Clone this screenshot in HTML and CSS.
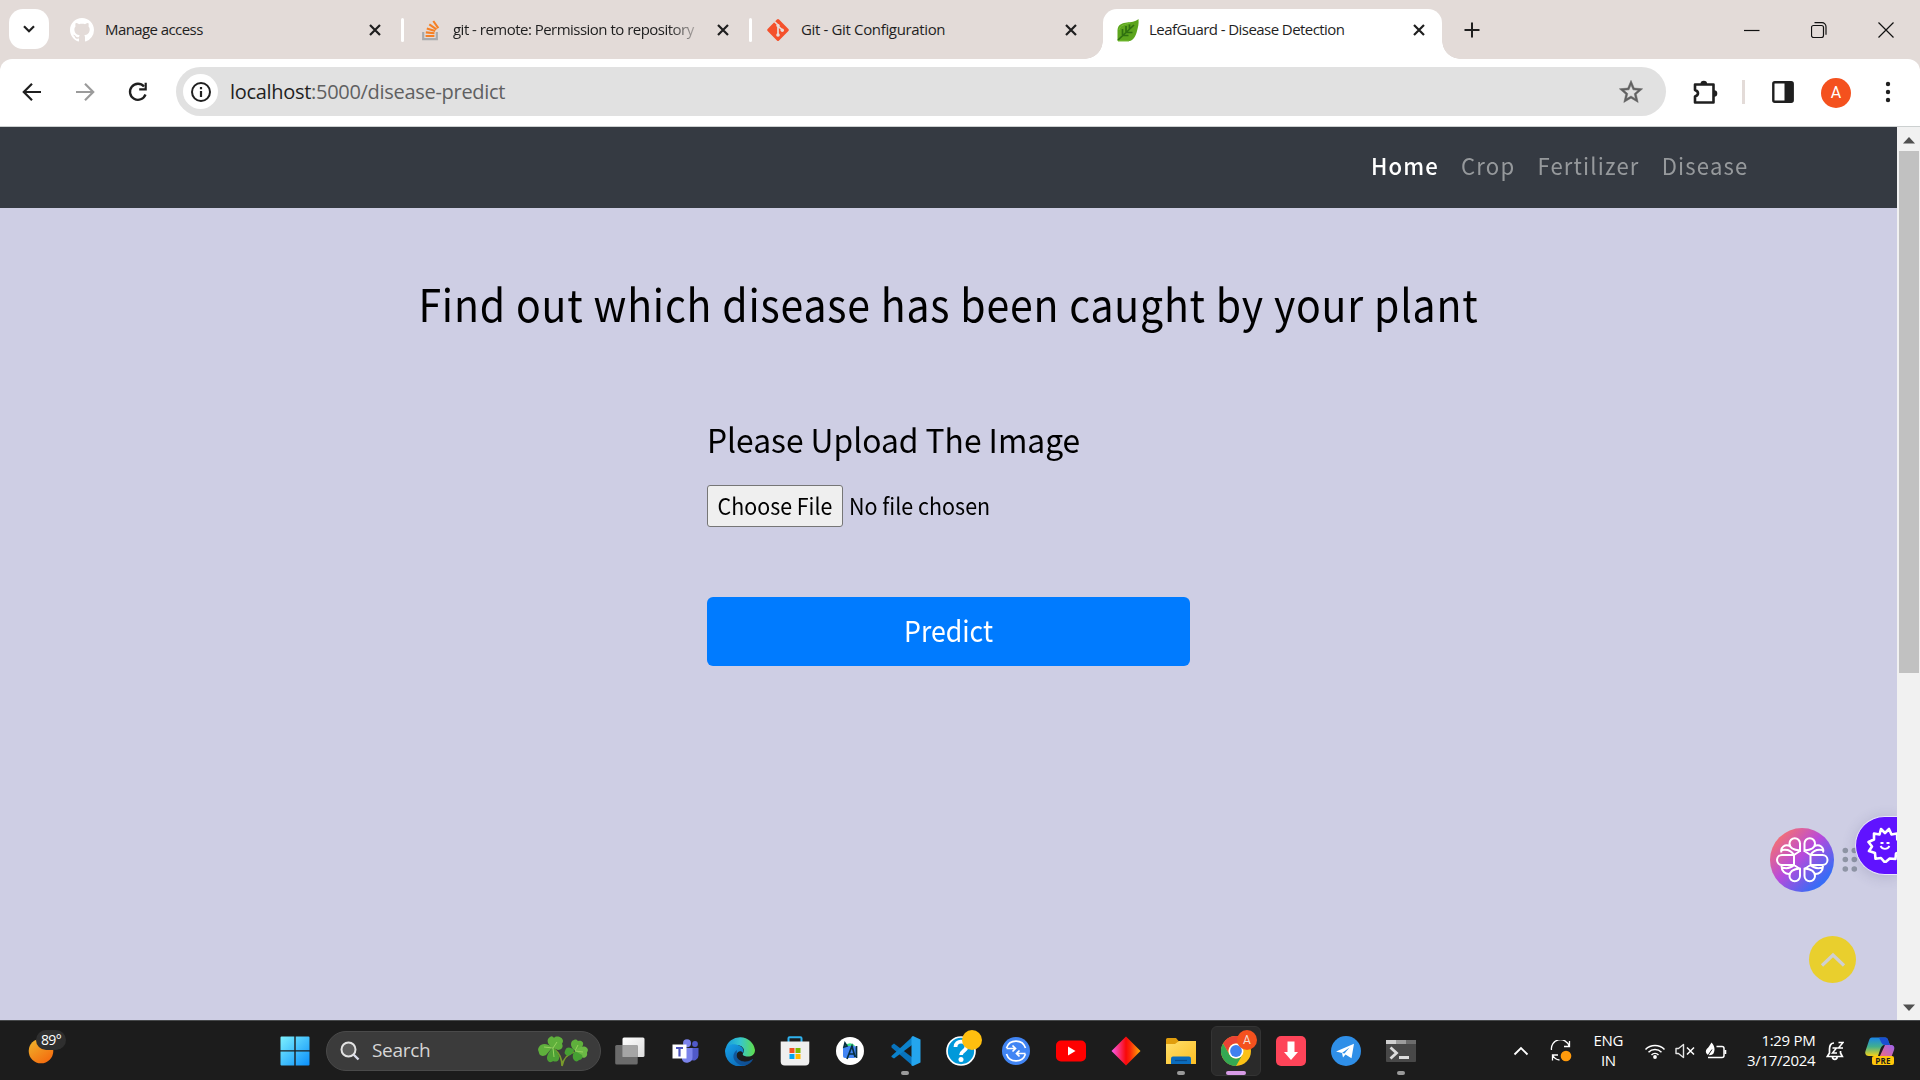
FILE: index.html
```html
<!DOCTYPE html>
<html lang="en">
<head>
<meta charset="utf-8">
<title>LeafGuard - Disease Detection</title>
<link rel="stylesheet" href="styles.css">
</head>
<body>
<header class="tabstrip">
  <button class="tab-search"><svg width="12" height="8" viewBox="0 0 12 8"><path d="M1 1.2l5 5 5-5" fill="none" stroke="#1f1f1f" stroke-width="2.2"/></svg></button>
  <div class="tab tab-1">
    <svg class="fav" width="24" height="24" viewBox="0 0 16 16"><path fill="#fff" d="M8 0C3.58 0 0 3.58 0 8c0 3.54 2.29 6.53 5.47 7.59.4.07.55-.17.55-.38 0-.19-.01-.82-.01-1.49-2.01.37-2.53-.49-2.69-.94-.09-.23-.48-.94-.82-1.13-.28-.15-.68-.52-.01-.53.63-.01 1.08.58 1.23.82.72 1.21 1.87.87 2.33.66.07-.52.28-.87.51-1.07-1.78-.2-3.64-.89-3.64-3.95 0-.87.31-1.59.82-2.15-.08-.2-.36-1.02.08-2.12 0 0 .67-.21 2.2.82.64-.18 1.32-.27 2-.27s1.36.09 2 .27c1.53-1.04 2.2-.82 2.2-.82.44 1.1.16 1.92.08 2.12.51.56.82 1.27.82 2.15 0 3.07-1.87 3.75-3.65 3.95.29.25.54.73.54 1.48 0 1.07-.01 1.93-.01 2.2 0 .21.15.46.55.38A8.01 8.01 0 0 0 16 8c0-4.42-3.58-8-8-8z"/></svg>
    <span class="tab-title t-manage">Manage access</span>
    <svg class="x" width="12" height="12" viewBox="0 0 12 12"><path d="M1 1l10 10M11 1L1 11"/></svg>
  </div>
  <i class="tab-sep"></i>
  <div class="tab tab-2">
    <svg class="fav" width="18" height="22" viewBox="0 0 18 22"><path d="M1.2 13v7.2h13.6V13" fill="none" stroke="#a9aaac" stroke-width="2.2"/><g stroke="#f58025" stroke-width="2.1"><path d="M3.6 17h8.8M3.8 13.4l8.7.9M4.8 9.4l8.4 2.6M7.3 5.4l7.2 5M11.3 2l5 7.2"/></g></svg>
    <span class="tab-title t-remote">git - remote: Permission to repository</span>
    <svg class="x" width="12" height="12" viewBox="0 0 12 12"><path d="M1 1l10 10M11 1L1 11"/></svg>
  </div>
  <i class="tab-sep"></i>
  <div class="tab tab-3">
    <svg class="fav" width="24" height="24" viewBox="0 0 24 24"><rect x="3.9" y="3.9" width="16.2" height="16.2" rx="1.5" transform="rotate(45 12 12)" fill="#f4512c"/><g stroke="#e9ddda" stroke-width="1.7" fill="none"><path d="M8.4 3.5L12 7v10M12 8l4.4 4.2"/></g><circle cx="12" cy="7.6" r="1.7" fill="#e9ddda"/><circle cx="12" cy="17" r="1.8" fill="#e9ddda"/><circle cx="16.3" cy="12.2" r="1.7" fill="#e9ddda"/></svg>
    <span class="tab-title t-config">Git - Git Configuration</span>
    <svg class="x" width="12" height="12" viewBox="0 0 12 12"><path d="M1 1l10 10M11 1L1 11"/></svg>
  </div>
  <div class="tab tab-active">
    <svg class="fav" width="22" height="24" viewBox="0 0 22 24"><path d="M.5 23V12C1 6 6 5 10 4.500S18 4 21.500 1c.5 5-.5 8-1.500 12-1 5-4 9.500-7.500 10z" fill="#5ca51d"/><path d="M1 22L17 7M5 17.500h6.500M8.500 14.500h7M5.500 11v6M9 8v6.500M12.500 6.500v5" stroke="#2f7010" stroke-width="1.700" fill="none"/><path d="M1 23h11M2 12C3 7 8 6.500 13 5" stroke="#74bd35" fill="none"/></svg>
    <span class="tab-title t-leaf">LeafGuard - Disease Detection</span>
    <svg class="x" width="12" height="12" viewBox="0 0 12 12"><path d="M1 1l10 10M11 1L1 11"/></svg>
  </div>
  <svg class="new-tab" width="16" height="16" viewBox="0 0 16 16"><path d="M8 .5v15M.5 8h15" stroke="#1f1f1f" stroke-width="2"/></svg>
  <div class="win-controls">
    <svg width="16" height="16" viewBox="0 0 16 16"><path d="M0 8.500h15.500"/></svg>
    <svg width="16" height="16" viewBox="0 0 16 16"><rect x=".5" y="3.500" width="12" height="12" rx="2"/><path d="M3.500.7h7.500a4 4 0 0 1 4 4v8"/></svg>
    <svg width="16" height="16" viewBox="0 0 16 16"><path d="M.5.5l15 15M15.500.5l-15 15"/></svg>
  </div>
</header>

<div class="toolbar">
  <svg class="nav-ic" width="20" height="20" viewBox="0 0 20 20"><path d="M19 10H2.500M10 1.800L1.800 10l8.200 8.200" fill="none" stroke="#1f1f1f" stroke-width="2.200"/></svg>
  <svg class="nav-ic" width="20" height="20" viewBox="0 0 20 20"><path d="M1 10h16.500M10 1.800l8.200 8.200-8.200 8.200" fill="none" stroke="#9b9b9b" stroke-width="2.200"/></svg>
  <svg class="nav-ic" width="20" height="20" viewBox="0 0 20 20"><path d="M17.500 12.500A8 8 0 1 1 16 4.500" fill="none" stroke="#1f1f1f" stroke-width="2.300"/><path d="M18.800.8v7.700h-7.600V6.200h5.400V.8z" fill="#1f1f1f"/></svg>
  <div class="omnibox">
    <span class="site-info"><svg width="22" height="22" viewBox="0 0 22 22"><circle cx="11" cy="11" r="9" fill="none" stroke="#1f1f1f" stroke-width="2"/><path d="M11 10v6M11 6v2.200" stroke="#1f1f1f" stroke-width="2.200"/></svg></span>
    <span class="url"><b>localhost</b>:5000/disease-predict</span>
    <svg class="star" width="28" height="28" viewBox="0 0 24 24"><path fill="#616161" stroke="#616161" stroke-width=".4" d="M22 9.240l-7.190-.62L12 2 9.190 8.630 2 9.240l5.460 4.730L5.820 21 12 17.270 18.180 21l-1.630-7.030L22 9.240zM12 15.400l-3.760 2.270 1-4.280-3.320-2.880 4.380-.38L12 6.100l1.710 4.040 4.380.38-3.320 2.880 1 4.280L12 15.400z"/></svg>
  </div>
  <svg class="puzzle" width="26" height="26" viewBox="0 0 26 26"><path d="M3 5.500h18.500v18H3v-6c4-1.500 4-5 0-6.500z" fill="none" stroke="#1f1f1f" stroke-width="2.600" stroke-linejoin="round"/><path d="M8.500 5a3.300 3.300 0 0 1 6.600 0zM22 11.200a3.300 3.300 0 0 1 0 6.600z" fill="#1f1f1f"/></svg>
  <i class="tool-sep"></i>
  <svg class="panel" width="22" height="22" viewBox="0 0 22 22"><rect x="1.300" y="1.300" width="19.400" height="19.400" rx="1.500" fill="none" stroke="#1f1f1f" stroke-width="2.400"/><path d="M12.500 1h8.500v20h-8.500z" fill="#1f1f1f"/></svg>
  <span class="avatar">A</span>
  <svg class="kebab" width="6" height="22" viewBox="0 0 6 22"><g fill="#1f1f1f"><circle cx="3" cy="3" r="2.200"/><circle cx="3" cy="11" r="2.200"/><circle cx="3" cy="19" r="2.200"/></g></svg>
</div>

<div class="viewport">
  <div class="page">
    <nav class="site-nav">
      <div class="links"><a class="on">Home</a><a>Crop</a><a>Fertilizer</a><a>Disease</a></div>
    </nav>
    <main>
      <h1>Find out which disease has been caught by your plant</h1>
      <form class="upload">
        <label>Please Upload The Image</label>
        <div class="file"><button type="button"><span>Choose File</span></button><span class="nofile">No file chosen</span></div>
        <button type="button" class="predict"><span>Predict</span></button>
      </form>
    </main>
    <svg class="brain" width="64" height="64" viewBox="0 0 64 64"><defs><linearGradient id="bg" x1=".1" y1=".1" x2=".9" y2=".9"><stop offset="0" stop-color="#f8736c"/><stop offset=".45" stop-color="#b84adb"/><stop offset=".9" stop-color="#386cf6"/></linearGradient></defs><circle cx="32" cy="32" r="32" fill="url(#bg)"/><g fill="none" stroke="#fff" stroke-width="2" stroke-linejoin="round"><path id="lobes" d="M30 24V15.500a5 5 0 0 0-10.500 0C19.500 20 23 22 30 22.500M20 18c-5-2.500-10 1.500-8.500 6.500M12 22c5-1 9 0 12 5l6-4M24 27H12a5 5 0 0 0 0 10h12zM30 41L24 37c-3 3-7 4-12 2.500M11.500 38c0 5 3.500 8.500 8.500 8M30 40.500V48a5 5 0 0 1-10.500 0C19.500 44 23 41 30 40.500z"/><use href="#lobes" transform="matrix(-1 0 0 1 64.500 0)"/></g></svg>
    <svg class="grip" width="16" height="26" viewBox="0 0 16 26"><g fill="#8f95a5"><circle cx="3.300" cy="3.500" r="2.800"/><circle cx="12.300" cy="3.500" r="2.800"/><circle cx="3.300" cy="12.500" r="2.800"/><circle cx="12.300" cy="12.500" r="2.800"/><circle cx="3.300" cy="22" r="2.800"/><circle cx="12.300" cy="22" r="2.800"/></g></svg>
    <div class="pill"><svg width="36" height="36" viewBox="0 0 36 36"><path d="M18 6l4-4 2.500 5.500 5.500-1 .3 6 5 2.500-3.300 4.500 2.500 5-5.500 2-.5 5.500-5.800-.5L18 35.500l-4-4.500-5.500.8-.5-5.800-6-2 3-4.500-3.500-4.500 5.500-2.500V6.500l5.500 1L14 2z" fill="none" stroke="#fff" stroke-width="2.600" stroke-linejoin="round"/><path d="M13.500 19c2 3.800 7 3.800 9 0M13.500 16h3M19.500 16h3" fill="none" stroke="#fff" stroke-width="1.800"/></svg></div>
    <div class="totop"><svg width="26" height="16" viewBox="0 0 26 16"><path d="M2 13.500L13 3l11 10.500" fill="none" stroke="#cfcfd2" stroke-width="3.200"/></svg></div>
  </div>
  <div class="scrollbar">
    <svg width="12" height="7" viewBox="0 0 12 7"><path d="M0 6.500L6 0l6 6.500z" fill="#505050"/></svg>
    <i class="thumb"></i>
    <svg width="12" height="7" viewBox="0 0 12 7"><path d="M0 .5L6 7l6-6.500z" fill="#505050"/></svg>
  </div>
</div>

<footer class="taskbar">
  <div class="weather"><svg width="26" height="26" viewBox="0 0 26 26"><defs><linearGradient id="sun" x1=".1" y1="0" x2=".8" y2="1"><stop offset="0" stop-color="#efb52c"/><stop offset="1" stop-color="#f5680d"/></linearGradient></defs><circle cx="13" cy="13" r="12.300" fill="url(#sun)"/></svg><span class="temp">89°</span></div>
  <svg class="start" width="30" height="30" viewBox="0 0 30 30"><defs><linearGradient id="win" x1="0" y1="0" x2="1" y2="1"><stop offset="0" stop-color="#7df1fd"/><stop offset="1" stop-color="#0a8ffb"/></linearGradient></defs><path fill="url(#win)" d="M1.500.5H14.300v13.700H.5V1.500a1 1 0 0 1 1-1zM15.700.5h12.800a1 1 0 0 1 1 1v12.700H15.700zM.5 15.600h13.800v13.900H1.500a1 1 0 0 1-1-1zM15.700 15.600h13.800v12.900a1 1 0 0 1-1 1H15.700z"/></svg>
  <div class="search">
    <svg width="20" height="20" viewBox="0 0 20 20"><circle cx="8.500" cy="8.500" r="7" fill="#5b5b5b" stroke="#e3e3e3" stroke-width="2"/><path d="M13.500 13.500l5 5" stroke="#d9dcea" stroke-width="2.400"/></svg>
    <span>Search</span>
    <svg class="clover" width="52" height="34" viewBox="0 0 52 34"><path d="M17 15q8 6 8 17M37 18Q27 21 25 32" fill="none" stroke="#7a9a2c" stroke-width="1.600"/><g fill="#5fb03c"><path d="M16 14C10 11 9 5 13 3c2-1.500 3 0 4 1 2-3 9-1 9 3 0 1.500-1 2-1 3 2 3-1 6-4 6zM15 14c-3-4-10-6-13-1-2 3 0 4 0 6 1 4 6 3 7 2z" /><path fill="#4da035" d="M15 14c-3 4-7 9-4 13 2 2 4 1 5 0 2 1 5 1 6-2 1-4-3-8-5-11z"/><path d="M37 16c-4-3-4-9 0-10 2-1 3 0 4 1 3-1 6 1 5 4-1 3-4 5-9 5z"/><path fill="#6bb845" d="M38 17c3-4 9-6 12-3 2 2 0 4 0 5 1 4-3 6-6 4z"/><path fill="#46a033" d="M37 16c-3-3-8-4-9 1-1 2 0 3 1 4 3 2 7-1 8-5zM38 17c-3 3-3 8 0 10 2 1 3 0 4-1 3 0 4-3 3-5z"/></g><path d="M16 14l4-6M16 14l-9-1M16 14l1 9M38 17l3-6M38 17l8 1" stroke="#96d35e" stroke-width="1"/></svg>
  </div>
  <div class="apps">
    <span class="app"><svg width="30" height="28" viewBox="0 0 30 28"><defs><linearGradient id="tv" x1="0" y1="0" x2="1" y2="1"><stop offset="0" stop-color="#fff"/><stop offset="1" stop-color="#dcdcdc"/></linearGradient></defs><rect x="7.500" y=".5" width="22" height="19.500" rx="1.500" fill="url(#tv)"/><rect x=".2" y="8" width="22.500" height="19.500" rx="1.500" fill="#747474" fill-opacity=".9"/><path d="M7.500 8h15v12h-15z" fill="#a5a5a5"/></svg></span>
    <span class="app"><svg width="27" height="24" viewBox="0 0 27 24"><circle cx="23" cy="5" r="2.900" fill="#5059c9"/><circle cx="15" cy="4.300" r="4" fill="#7b83eb"/><path d="M18 9h8.500v7.500a5 5 0 0 1-8 4z" fill="#5059c9"/><path d="M10 9h10.500v9a5.500 5.500 0 0 1-10.500 2.500z" fill="#7b83eb"/><path d="M.500 5.500h14v14h-14z" fill="#fff"/><path d="M4 9h7M7.500 9v8.500" stroke="#4b53bc" stroke-width="2.200"/></svg></span>
    <span class="app"><svg width="30" height="30" viewBox="0 0 30 30"><defs><linearGradient id="e1"><stop offset="0" stop-color="#1599dc"/><stop offset=".5" stop-color="#36c6cf"/><stop offset="1" stop-color="#61de49"/></linearGradient><linearGradient id="e2" x1="0" y1="0" x2="1" y2="1"><stop offset="0" stop-color="#18a2e8"/><stop offset="1" stop-color="#075aab"/></linearGradient></defs><path d="M.5 13A15 15 0 0 1 30 14c0 5-4 7-8.500 6.500-2.500-.5-4.500-1.500-3.500-3 3-5-2-8.500-6-8.500C7 9 3 10 .5 13z" fill="url(#e1)"/><path d="M.1 14C1 10 6 7.500 11 8.500c6 1 8.500 5 7 8.500-1.500-3-6-2-6.500 2-.5 4 4 7 8.500 7 3.500 0 6-1.500 8-3A15 15 0 0 1 .1 14z" fill="url(#e2)"/><path d="M12 14c-7 5-3 14 6 15.700C23 29.500 27 26.500 28 23c-5 3.500-15 4-16.500-3.500z" fill="#114a8b" opacity=".75"/></svg></span>
    <span class="app"><svg width="30" height="30" viewBox="0 0 30 30"><path d="M8.500 6V2.300a1 1 0 0 1 1-1h11a1 1 0 0 1 1 1V6" fill="none" stroke="#2fb2ee" stroke-width="2"/><path d="M.7 5.500h28.600v20a4 4 0 0 1-4 4H4.700a4 4 0 0 1-4-4z" fill="#efefef"/><path d="M9.500 12h5v5h-5z" fill="#f25022"/><path d="M15.500 12h5v5h-5z" fill="#7fba00"/><path d="M9.500 18h5v5h-5z" fill="#00a4ef"/><path d="M15.500 18h5v5h-5z" fill="#ffb900"/></svg></span>
    <span class="app"><svg width="28" height="28" viewBox="0 0 28 28"><circle cx="14" cy="14" r="14" fill="#fff"/><path d="M9 9a5.500 4.500 0 0 1 10 0z" fill="#3ddc84"/><rect x="7" y="9" width="13" height="12" rx="2" fill="#4285f4"/><path d="M9 6l-1 4 3-1zM11 22l5-13 3 11M20.500 9v12M13 17h6" fill="none" stroke="#073042" stroke-width="1.700"/></svg></span>
    <span class="app run"><svg width="30" height="30" viewBox="0 0 30 30"><path d="M.5 9.500L3 7.500l19 14.500V30L.5 11.500z" fill="#0873bd"/><path d="M.5 20L22 .3v8L3 22.500.5 21z" fill="#0b82cc"/><path d="M22 0l7.500 3.500v23L22 30l-1.500-.5V1z" fill="#24a5ee"/></svg></span>
    <span class="app"><svg width="30" height="30" viewBox="0 0 30 30"><circle cx="15" cy="15" r="14" fill="#0099da" stroke="#fff" stroke-width="1.700"/><path d="M9.500 11c0-7 11-7 11-.5 0 4.500-5.500 4.500-5.500 8.500" fill="none" stroke="#fff" stroke-width="3.800"/><circle cx="15" cy="23.500" r="2.500" fill="#fff"/></svg><i class="badge"></i></span>
    <span class="app"><svg width="28" height="28" viewBox="0 0 28 28"><circle cx="14" cy="14" r="14" fill="#4185f4"/><path d="M4.500 11a10 10 0 0 1 19 0M4.500 17a10 10 0 0 0 19 0M4.500 11.500h9M10.500 8.500l3 3-3 3M23.500 16.500h-9M17.500 13.500l-3 3 3 3" fill="none" stroke="#fff" stroke-width="1.700"/></svg></span>
    <span class="app"><svg width="30" height="22" viewBox="0 0 30 22"><rect y=".5" width="30" height="21" rx="5" fill="#f00"/><path d="M12 6.500l7.500 4.500-7.500 4.500z" fill="#fff"/></svg></span>
    <span class="app"><svg width="30" height="30" viewBox="0 0 30 30"><defs><linearGradient id="dm"><stop offset="0" stop-color="#f95cf0"/><stop offset=".5" stop-color="#f90808"/><stop offset=".65" stop-color="#fa2a08"/><stop offset="1" stop-color="#fcb008"/></linearGradient></defs><path d="M15 .5L29.500 15 15 29.500.5 15z" fill="url(#dm)"/></svg></span>
    <span class="app run"><svg width="30" height="28" viewBox="0 0 30 28"><defs><linearGradient id="fd" x1="0" y1="0" x2="1" y2="1"><stop offset="0" stop-color="#ffdf6b"/><stop offset="1" stop-color="#fdbf24"/></linearGradient></defs><path d="M0 2.500A1.500 1.500 0 0 1 1.500 1H10l3 3.500V9H0z" fill="#e09d0d"/><path d="M0 7h9l4-3h17v23H0z" fill="url(#fd)"/><path d="M5 27v-5.500a2 2 0 0 1 2-2h16a2 2 0 0 1 2 2V27z" fill="#0b6cbd"/><path d="M9 23.500h12" stroke="#0a4c8c" stroke-width="1.200"/></svg></span>
    <span class="app current"><svg width="30" height="30" viewBox="0 0 30 30"><circle cx="15" cy="15" r="15" fill="#fbc116"/><path d="M2 7.500a15 15 0 0 1 26 0H15a7.500 7.500 0 0 0-6.500 11.300z" fill="#ea4335"/><path d="M2 7.500L8.500 18.800A7.500 7.500 0 0 0 21.500 18.700L15 30A15 15 0 0 1 2 7.500z" fill="#34a853"/><circle cx="15" cy="15" r="7.500" fill="#fff"/><circle cx="15" cy="15" r="5.900" fill="#3f80ee"/></svg><i class="badge who">A</i></span>
    <span class="app"><svg width="30" height="30" viewBox="0 0 30 30"><rect width="30" height="30" rx="5" fill="#fe4459"/><path d="M11.500 5.500h7v10.500H22l-7 8-7-8h3.500z" fill="#fff"/></svg></span>
    <span class="app"><svg width="30" height="30" viewBox="0 0 30 30"><circle cx="15" cy="15" r="15" fill="#2f8fe8"/><path d="M5 15.500L23 7.700l-2.500 14.500-6-3.700-2.500 3-1-4.500z" fill="#fff"/><path d="M11 17l7.500-5.500-5 6z" fill="#2f8fe8"/></svg></span>
    <span class="app run"><svg width="30" height="22" viewBox="0 0 30 22"><rect width="30" height="22" rx="1" fill="#484848"/><path d="M0 0h10v4H0z" fill="#cfcfcf"/><path d="M10 0h10v4H10z" fill="#9c9c9c"/><path d="M20 0h10v4H20z" fill="#6c6c6c"/><path d="M4.500 7.500l6 5.500-6 5.500M13 17.500h10" fill="none" stroke="#dcdcdc" stroke-width="2.800"/></svg></span>
  </div>
  <div class="tray">
    <svg class="chev" width="16" height="10" viewBox="0 0 16 10"><path d="M1.500 8.500L8 2l6.500 6.500" fill="none" stroke="#fff" stroke-width="1.800"/></svg>
    <svg class="sync" width="22" height="22" viewBox="0 0 22 22"><path d="M1.500 10A9 9 0 0 1 19 6M19.500 1v5.500H14M2.500 20.500V15H8M2.500 15a9 9 0 0 0 7 5" fill="none" stroke="#fff" stroke-width="1.300"/><circle cx="16" cy="16" r="5.300" fill="#ff9a0c"/></svg>
    <div class="lang"><span>ENG</span><span>IN</span></div>
    <svg class="wifi" width="22" height="18" viewBox="0 0 22 18"><g fill="none" stroke="#fff" stroke-width="1.500"><path d="M1.500 7.500a13.300 13.300 0 0 1 19 0M4.500 10.300a9.200 9.200 0 0 1 13 0M7.500 13a5 5 0 0 1 7 0"/></g><circle cx="11" cy="15" r="1.900" fill="#fff"/></svg>
    <svg class="vol" width="20" height="16" viewBox="0 0 20 16"><path d="M1 5.500h2.500L8.500 1.500v13l-5-4H1z" fill="none" stroke="#e5e5e5" stroke-width="1.400" stroke-linejoin="round"/><path d="M12 4.500l7 7M19 4.500l-7 7" stroke="#fff" stroke-width="1.500"/></svg>
    <svg class="batt" width="22" height="18" viewBox="0 0 22 18"><path d="M11.500 4.500H17a2 2 0 0 1 2 2v7a2 2 0 0 1-2 2H3" fill="none" stroke="#fff" stroke-width="1.500"/><path d="M19.500 8h1.800v4h-1.800z" fill="#fff"/><path d="M6.500.5c3 3 4 7 2 11-2 2.500-6 2-7 0-2-3 1-5 2.500-7z" fill="#fff"/><path d="M3 13.500l4-6" stroke="#1c1c1c"/></svg>
    <div class="clock"><span class="time">1:29 PM</span><span class="date">3/17/2024</span></div>
    <svg class="bell" width="18" height="20" viewBox="0 0 18 20"><path d="M8 2C5 2 3.500 4.500 3.500 8v4L1.300 15.500h15L14.500 12v-2M6.500 16a2.300 2.300 0 0 0 4.600 0" fill="none" stroke="#fff" stroke-width="1.700"/><path d="M6.500 7h4l-4 5h4.500M12.500 1.500H17L12.500 7H17" fill="none" stroke="#fff" stroke-width="1.500"/></svg>
    <div class="copilot"><svg width="30" height="28" viewBox="0 0 30 28"><defs><linearGradient id="c1" x1="0" y1="0" x2="0" y2="1"><stop offset="0" stop-color="#1a85e8"/><stop offset=".5" stop-color="#42b08c"/><stop offset="1" stop-color="#f5d21a"/></linearGradient><linearGradient id="c2" x1="1" y1="0" x2="0" y2="1"><stop offset="0" stop-color="#9a62ed"/><stop offset="1" stop-color="#f96c76"/></linearGradient></defs><path d="M7 .5h13c2 0 3 1.500 3.500 4L25 8h-5c-3 0-4 2-5 5l-2 6H4c-3 0-4.500-2-3.500-5L4 3.500C4.500 1.500 5.500.5 7 .5z" fill="url(#c1)"/><path d="M14 .5h6c2 0 3 1.500 3.500 4L25 8h-5c-2 0-3-1-4-3z" fill="#1a4fd0"/><path d="M20 8h6c2.500 0 4 1.500 3 5l-3 8H14z" fill="url(#c2)"/></svg><span>PRE</span></div>
  </div>
</footer>
</body>
</html>
```
FILE: styles.css
```css
* { box-sizing: border-box; }
body { margin: 0; width: 1920px; height: 1080px; overflow: hidden; display: flex; flex-direction: column; background: #e3dbd8; font-family: "Open Sans", "Noto Sans", sans-serif; color: #1f1f1f; }
svg { display: block; flex: none; }
button { font: inherit; color: inherit; border: 0; padding: 0; }
i { font-style: normal; }

/* Tab strip */
.tabstrip { height: 59px; flex: none; display: flex; align-items: flex-start; background: #e3dbd8; }
.tab-search { width: 40px; height: 40px; margin: 9px 0 0 9px; border-radius: 14px; background: #fff; display: grid; place-items: center; }
.tab { height: 50px; margin-top: 9px; display: flex; align-items: center; padding-bottom: 9px; }
.tab-title { white-space: nowrap; font-size: 15px; line-height: 20px; margin-top: -1px; }
.x { margin-left: auto; stroke: #1f1f1f; stroke-width: 2.2; }
.tab-1 { width: 332px; padding-left: 21px; }
.tab-1 .tab-title { margin-left: 11px; }
.tab-sep { width: 3px; height: 24px; margin: 18px 0 0 20px; background: #fff; border-radius: 2px; flex: none; }
.tab-2 { width: 325px; padding-left: 18px; }
.tab-2 .tab-title { margin-left: 13px; width: 245px; -webkit-mask-image: linear-gradient(90deg, #000 88%, rgba(0,0,0,.2)); mask-image: linear-gradient(90deg, #000 88%, rgba(0,0,0,.2)); }
.tab-3 { width: 325px; padding-left: 14px; }
.tab-3 .tab-title { margin-left: 11px; }
.tab-active { width: 339px; margin-left: 26px; padding: 0 17px 9px 14px; background: #fff; border-radius: 14px 14px 0 0; position: relative; }
.tab-active::before, .tab-active::after { content: ""; position: absolute; bottom: 0; width: 18px; height: 18px; }
.tab-active::before { left: -18px; background: radial-gradient(circle at 0 0, transparent 17.5px, #fff 18px); }
.tab-active::after { right: -18px; background: radial-gradient(circle at 100% 0, transparent 17.5px, #fff 18px); }
.tab-active .tab-title { margin-left: 10px; }
.t-manage { letter-spacing: -.58px; }
.t-remote { letter-spacing: -.52px; }
.t-config { letter-spacing: -.35px; }
.t-leaf { letter-spacing: -.56px; }
.new-tab { margin: 22px 0 0 22px; }
.win-controls { margin: 22px 26px 0 auto; display: flex; gap: 51px; fill: none; stroke: #111; stroke-width: 1.2; }

/* Toolbar */
.toolbar { height: 68px; flex: none; display: flex; align-items: center; background: #fff; border-bottom: 1px solid #ccd0d0; border-radius: 12px 12px 0 0; padding: 0 29px 2px 22px; }
.nav-ic { margin-right: 33px; }
.nav-ic:nth-child(3) { margin-right: 28px; }
.omnibox { width: 1490px; height: 49px; border-radius: 25px; background: #e1e1e1; display: flex; align-items: center; padding: 0 21px 0 7px; }
.site-info { width: 35px; height: 35px; border-radius: 50%; background: #fff; display: grid; place-items: center; }
.url { margin-left: 12px; font-size: 20px; line-height: 28px; letter-spacing: -.3px; color: #5f6061; }
.url b { font-weight: 400; color: #1f1f1f; }
.star { margin-left: auto; }
.puzzle { margin-left: 26px; }
.tool-sep { width: 3px; height: 24px; margin-left: 24px; background: #e3dbd8; }
.panel { margin-left: 27px; }
.avatar { width: 30px; height: 30px; margin: 2px 0 0 27px; border-radius: 50%; background: #f4511e; color: #fff; font: 16px/30px Roboto, sans-serif; text-align: center; }
.kebab { margin-left: auto; }

/* Page: the text face is condensed slightly with a horizontal scale */
.viewport { flex: 1; display: flex; min-height: 0; }
.page { width: 1897px; background: #cecee4; position: relative; font-family: "Noto Sans CJK SC", "Noto Sans", sans-serif; color: #000; }
.site-nav { height: 81px; background: #353a42; display: flex; justify-content: flex-end; align-items: center; padding: 0 149px 5px 0; }
.links { display: flex; gap: 23px; font-size: 23px; line-height: 34px; color: #96999c; letter-spacing: 1.2px; transform: scaleX(.962); transform-origin: right; }
.on { color: #fff; font-weight: 500; }
h1 { margin: 62px 0 0; font-weight: 400; font-size: 45px; line-height: 66px; text-align: center; letter-spacing: .9px; white-space: nowrap; transform: scaleX(.91); }
.upload { width: 483px; margin: 79px 0 0 707px; display: flex; flex-direction: column; }
.upload label { font-size: 33px; line-height: 48px; white-space: nowrap; transform: scaleX(.962); transform-origin: left; }
.file { display: flex; align-items: center; margin-top: 22px; font-size: 23px; line-height: 34px; }
.file button { width: 136px; height: 42px; border: 1px solid #767676; border-radius: 3px; background: #efefef; color: #000; }
.file button span { display: block; margin-top: -2px; transform: scaleX(.93); }
.nofile { margin: -2px 0 0 6px; transform: scaleX(.934); transform-origin: left; }
.predict { margin-top: 70px; height: 69px; border-radius: 6px; background: #007bff; color: #fff; font-size: 29px; line-height: 42px; }
.predict span { display: block; margin-top: -5px; transform: scaleX(.92); }
.brain { position: absolute; left: 1770px; top: 701px; }
.grip { position: absolute; left: 1842px; top: 720px; }
.pill { position: absolute; right: 0; top: 689px; width: 42px; height: 59px; padding: 10px 0 0 11px; overflow: hidden; background: #6013ff; border: 1px solid #e8e6fb; border-right: 0; border-radius: 30px 0 0 30px; box-shadow: 0 2px 14px rgba(60, 60, 110, .2); clip-path: inset(-30px 0 -30px -30px); }
.totop { position: absolute; left: 1809px; top: 809px; width: 47px; height: 47px; border-radius: 50%; background: #e9cf2d; display: grid; place-items: center; }
.scrollbar { width: 23px; background: #f1f1f1; display: flex; flex-direction: column; align-items: center; padding: 10px 0 9px; }
.thumb { width: 20px; height: 522px; margin: 7px 0 auto; background: #c1c1c1; }

/* Taskbar */
.taskbar { height: 60px; flex: none; display: flex; align-items: center; background: #1c1c1c; border-top: 1px solid #46484a; color: #fff; }
.weather { width: 253px; padding-left: 28px; position: relative; }
.temp { position: absolute; left: 36px; top: -8px; width: 30px; height: 20px; border-radius: 10px; background: #2f2f2f; font-size: 14px; line-height: 20px; text-align: center; letter-spacing: -.6px; }
.start { margin-left: 27px; }
.search { width: 275px; height: 40px; margin-left: 16px; border-radius: 20px; background: #3b3b3b; border: 1px solid #4a4a4a; display: flex; align-items: center; padding: 0 11px 0 13px; font-size: 19px; color: #d6d6d6; }
.search span { margin: -1px 0 0 12px; letter-spacing: -.3px; }
.clover { margin-left: auto; }
.apps { display: flex; gap: 5px; margin-left: 4px; }
.app { width: 50.1px; height: 50px; display: grid; place-items: center; position: relative; }
.run::after, .current::after { content: ""; position: absolute; left: 21px; bottom: 1px; width: 8px; height: 4px; border-radius: 2px; background: #9a9a9a; }
.current { background: #2a2a2a; border: 1px solid #343434; border-radius: 6px; }
.current::after { left: 14px; bottom: 0; width: 20px; background: #d79be6; }
.badge { position: absolute; left: 26px; top: 4px; width: 20px; height: 20px; border-radius: 50%; background: #ffbf0f; }
.who { left: 25px; top: 3px; background: #f4511e; color: #f5ded5; font: 12px/20px Roboto, sans-serif; text-align: center; }
.tray { flex: 1; display: flex; align-items: center; padding-right: 25px; font-size: 15px; line-height: 20px; letter-spacing: -.3px; }
.chev { margin-left: 87px; }
.sync { margin-left: 21px; }
.lang { width: 40px; margin: -2px 0 0 16px; display: flex; flex-direction: column; align-items: center; }
.wifi { margin-left: 16px; }
.vol { margin-left: 9px; }
.batt { margin-left: 10px; }
.clock { width: 88px; margin-top: -2px; display: flex; flex-direction: column; align-items: flex-end; }
.bell { margin-left: 11px; }
.copilot { margin-left: auto; position: relative; }
.copilot span { position: absolute; left: 7px; top: 19px; width: 22px; height: 9px; border-radius: 2px; background: #ffc60a; color: #1c1c1c; font: 700 8px/9px "Open Sans", sans-serif; text-align: center; letter-spacing: .3px; }
```
